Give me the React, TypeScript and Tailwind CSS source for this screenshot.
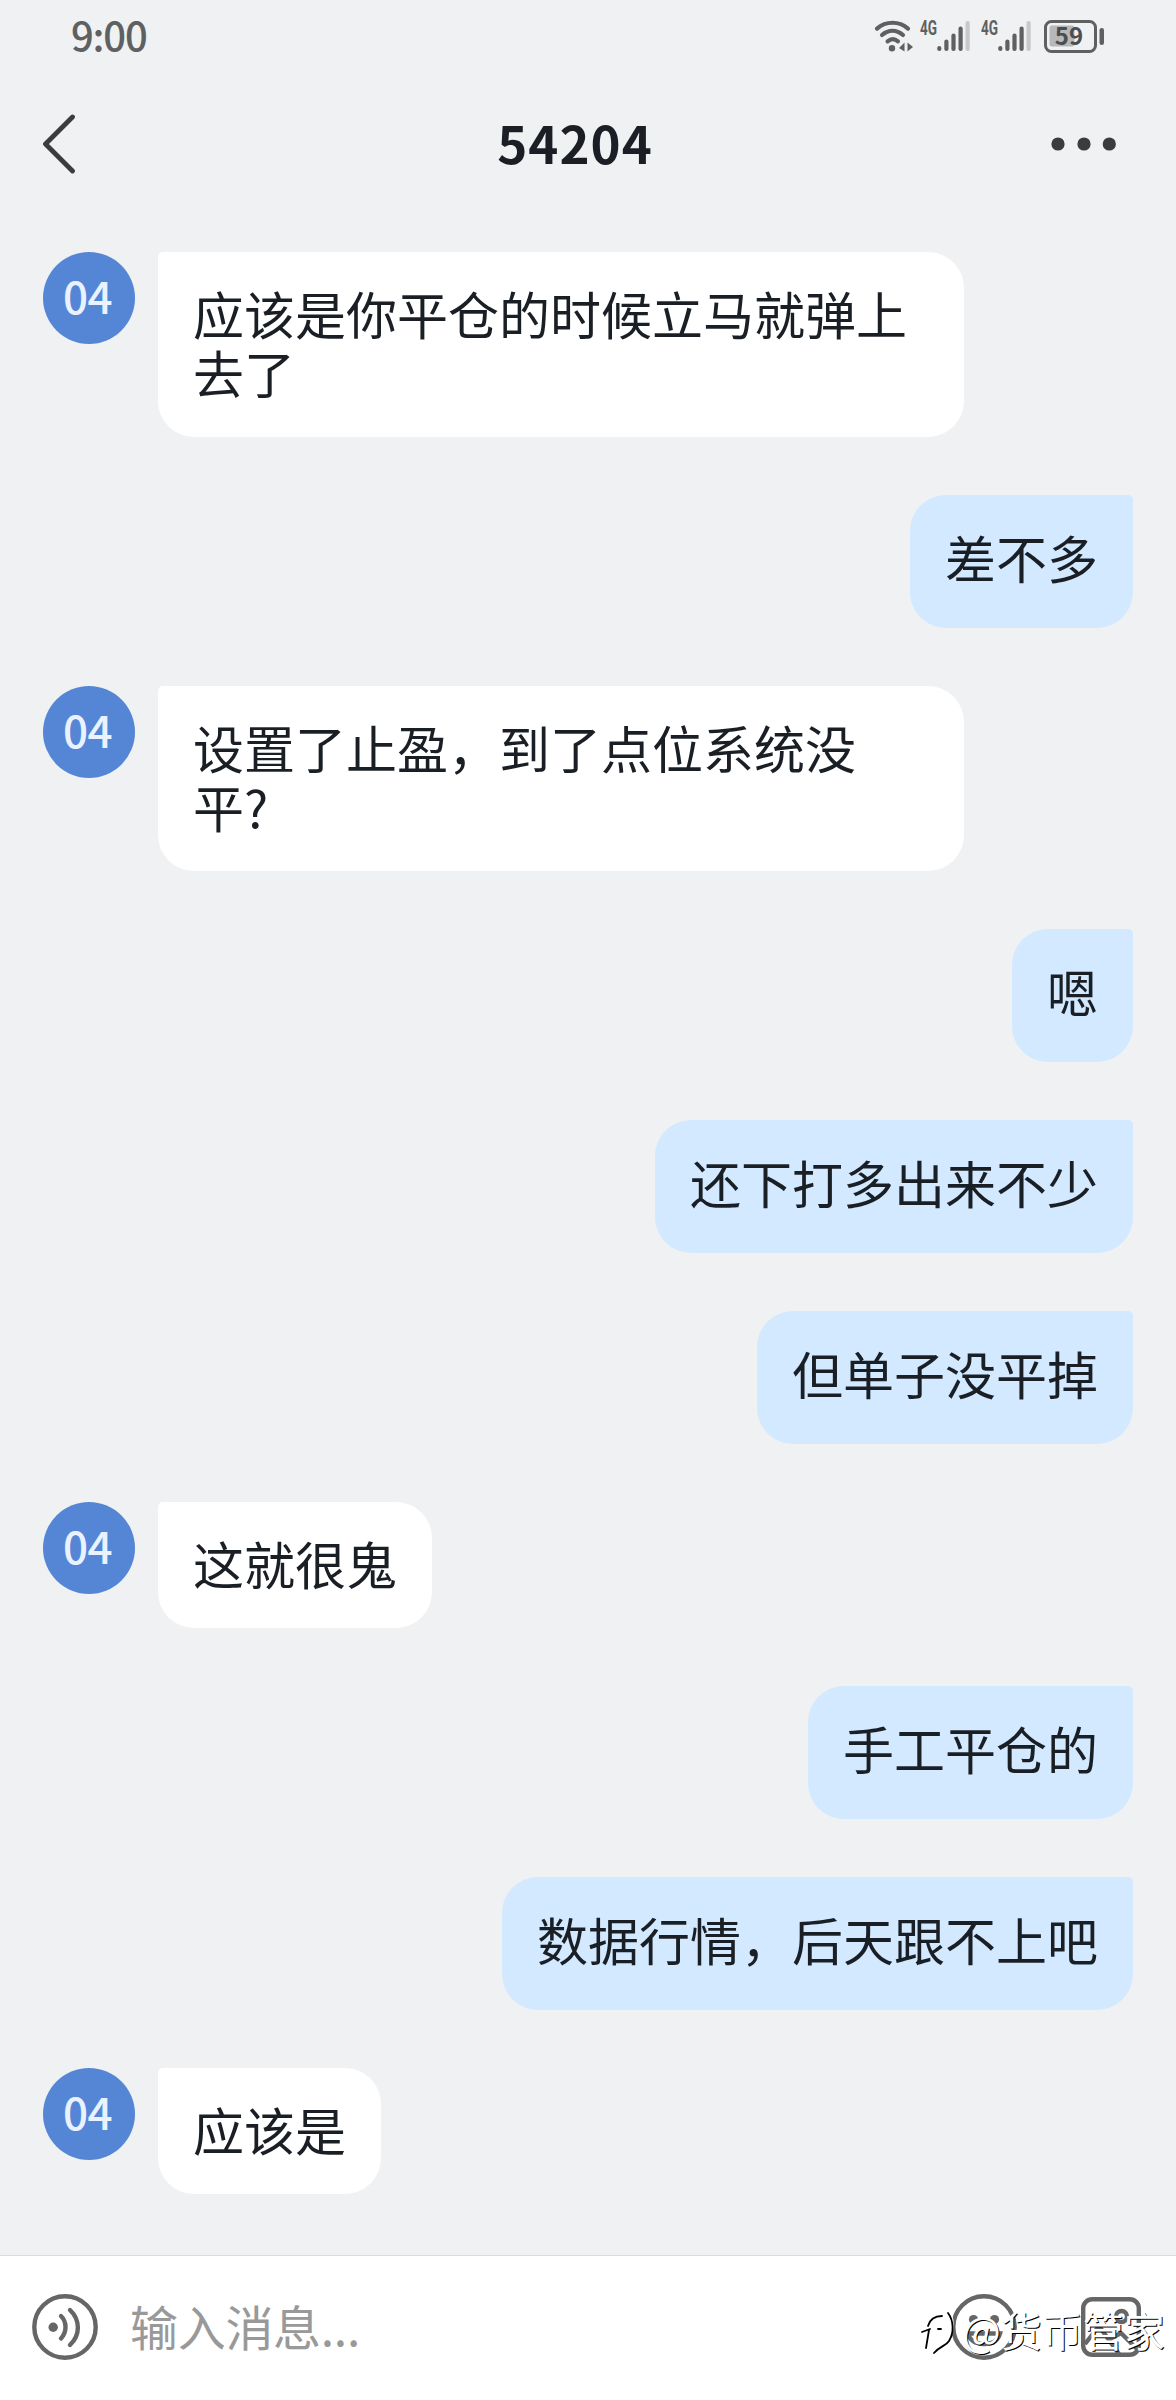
import type { ReactNode } from 'react';

type Message = {
  id: number;
  mine?: boolean;
  text: string;
};

const messages: Message[] = [
  { id: 1, text: '应该是你平仓的时候立马就弹上去了' },
  { id: 2, mine: true, text: '差不多' },
  { id: 3, text: '设置了止盈，到了点位系统没平?' },
  { id: 4, mine: true, text: '嗯' },
  { id: 5, mine: true, text: '还下打多出来不少' },
  { id: 6, mine: true, text: '但单子没平掉' },
  { id: 7, text: '这就很鬼' },
  { id: 8, mine: true, text: '手工平仓的' },
  { id: 9, mine: true, text: '数据行情，后天跟不上吧' },
  { id: 10, text: '应该是' },
];

function Signal() {
  return (
    <div className="relative w-[50px] h-8 shrink-0">
      <span className="absolute left-0 top-[-2px] origin-left scale-x-[0.68] text-[20px] leading-[20px] font-bold font-['Roboto',sans-serif] text-[#5f6061]">4G</span>
      <svg className="absolute left-0 top-0" width="50" height="32" viewBox="0 0 50 32" strokeWidth="4.2" strokeLinecap="round" stroke="#5f6061">
        <path d="M19.3 28v1M26.4 21.5V29M33.5 15.5V29M40.6 8.5V29" />
        <path d="M47.6 3V29" stroke="#c6c8c9" />
      </svg>
    </div>
  );
}

function StatusBar() {
  return (
    <div className="h-[72px] shrink-0 flex items-start justify-between pl-[71px] pr-[72px] text-[#5f6061]">
      <div className="mt-[10px] text-[40px] leading-[48px] font-medium tracking-[-1.2px] font-['Noto_Sans_CJK_SC',sans-serif]">9:00</div>
      <div className="flex items-start mt-5">
        <svg className="shrink-0 mr-[7px]" width="39" height="33" viewBox="0 0 39 33" fill="none" stroke="#5f6061" strokeWidth="4.2" strokeLinecap="round">
          <path d="M3 8.6C12 .8 25 .8 34 8.6" />
          <path d="M8 15C14.5 9.5 22.5 9.5 29 15" />
          <path d="M13.6 21.3C17 18.5 20.5 18.5 24 21.3" />
          <circle cx="18" cy="28.2" r="3.2" fill="#5f6061" stroke="none" />
          <path d="M30.5 22.5V31.5L25 28ZM33.500 22.5V31.5L39 27Z" fill="#5f6061" stroke="none" />
        </svg>
        <Signal />
        <div className="w-[11px]" />
        <Signal />
        <div className="relative ml-[13px] w-[60px] h-8">
          <svg width="60" height="33" viewBox="0 0 60 33" fill="none">
            <rect x="1.5" y="1.5" width="50" height="30" rx="6" stroke="#5f6061" strokeWidth="3" />
            <rect x="5.5" y="5.5" width="25" height="21" rx="2.5" fill="#b7b8b9" />
            <rect x="55.5" y="8" width="4.5" height="17" rx="2.2" fill="#5f6061" />
          </svg>
          <span className="absolute left-0 top-[2px] w-[50px] text-center text-[24px] leading-[26px] font-bold font-['Noto_Sans_CJK_SC',sans-serif] text-[#4c4d4e]">59</span>
        </div>
      </div>
    </div>
  );
}

function Header() {
  return (
    <div className="h-[180px] shrink-0 flex items-start justify-between pl-[42px] pr-[59px]">
      <svg className="mt-[42px]" width="34" height="60" viewBox="0 0 34 60" fill="none" stroke="#3c3c3c" strokeWidth="4.8" strokeLinecap="round" strokeLinejoin="round">
        <path d="M30.5 3L3.5 30L30.5 57" />
      </svg>
      <h1 className="mt-[40px] ml-[23px] text-[51px] leading-[60px] font-bold tracking-[1px] font-['Noto_Sans_CJK_SC',sans-serif] text-[#1b1f25]">54204</h1>
      <svg className="mt-[65px]" width="66" height="14" viewBox="0 0 66 14" fill="#3c3c3c">
        <circle cx="7" cy="7" r="6.6" />
        <circle cx="33" cy="7" r="6.6" />
        <circle cx="58.3" cy="7" r="6.6" />
      </svg>
    </div>
  );
}

function Bubble({ mine, children }: { mine?: boolean; children: ReactNode }) {
  return (
    <div
      className={`max-w-[806px] px-[35px] rounded-[36px] text-[51px] leading-[59px] text-[#1a1f25] ${
        mine ? 'bg-[#d2e9ff] pt-[33px] pb-[41px] rounded-tr-[5px]' : 'bg-white pt-8 pb-[35px] rounded-tl-[5px]'
      }`}
    >
      {children}
    </div>
  );
}

function Row({ message }: { message: Message }) {
  if (message.mine) {
    return (
      <div className="flex justify-end">
        <Bubble mine>{message.text}</Bubble>
      </div>
    );
  }
  return (
    <div className="flex items-start gap-[23px]">
      <div className="size-[92px] pr-[3px] shrink-0 rounded-full bg-[#5586d6] text-[#eaf2ff] text-[44px] leading-[86px] font-medium tracking-[-0.5px] text-center">04</div>
      <Bubble>{message.text}</Bubble>
    </div>
  );
}

function Composer() {
  return (
    <div className="relative h-[145px] shrink-0 flex items-start bg-white border-t border-[#dcdcdc] pl-8 pr-[35px]">
      <svg className="mt-[38px]" width="66" height="66" viewBox="0 0 66 66" fill="none" stroke="#666" strokeWidth="4.4" strokeLinecap="round">
        <circle cx="33" cy="33" r="30.7" />
        <circle cx="21.2" cy="33.2" r="4.7" fill="#666" stroke="none" />
        <path d="M29 22C35 28 35 38 29 44.5" />
        <path d="M38 16C48.5 26 48.5 41 38 51" />
      </svg>
      <div className="mt-[37px] ml-[32px] flex-1 text-[48px] leading-[64px] tracking-[-0.3px] text-[#999]">输入消息...</div>
      <svg className="mt-[38px] mr-[64px]" width="66" height="66" viewBox="0 0 66 66" fill="none" stroke="#666" strokeWidth="4.4" strokeLinecap="round">
        <circle cx="33" cy="33" r="30.7" />
        <circle cx="22.5" cy="25.5" r="4.6" fill="#666" stroke="none" />
        <circle cx="43.5" cy="25.5" r="4.6" fill="#666" stroke="none" />
        <path d="M17 39.5H49C47 47 41 50 33 50S19 47 17 39.5Z" />
      </svg>
      <svg className="mt-[41px]" width="60" height="60" viewBox="0 0 60 60" fill="none" stroke="#666" strokeWidth="4.4" strokeLinejoin="round">
        <rect x="2.2" y="2.2" width="55.6" height="55.6" rx="9" />
        <circle cx="40.5" cy="19.5" r="5.5" />
        <path d="M4 47L18 29L38 57M27 43L40 36L57 53" />
      </svg>
      <div className="absolute left-[920px] top-[43px] flex items-center text-white [text-shadow:1px_1px_0_#000]">
        <svg className="mr-[2px]" width="40" height="60" viewBox="0 0 40 60" fill="none" strokeLinecap="round">
          <path d="M25 9C34 18 34 34 25 42" stroke="#fff" strokeWidth="4" />
          <path d="M28 14C34 22 34 34 29 42C26 47 20 47 14 54M8 27C10 20 15 17 22 17M2 33L10 30M9 31L6 49M18 30H21" stroke="#000" strokeWidth="1.8" />
        </svg>
        <span className="text-[41px] leading-[60px] whitespace-nowrap">@货币管家</span>
      </div>
    </div>
  );
}

export default function App() {
  return (
    <div lang="zh-CN" className="w-[1176px] h-[2400px] flex flex-col overflow-hidden bg-[#eff1f3] font-['Noto_Sans_CJK_SC',sans-serif]">
      <StatusBar />
      <Header />
      <main className="flex-1 min-h-0 flex flex-col gap-[58px] px-[43px]">
        {messages.map((m) => (
          <Row key={m.id} message={m} />
        ))}
      </main>
      <Composer />
    </div>
  );
}
